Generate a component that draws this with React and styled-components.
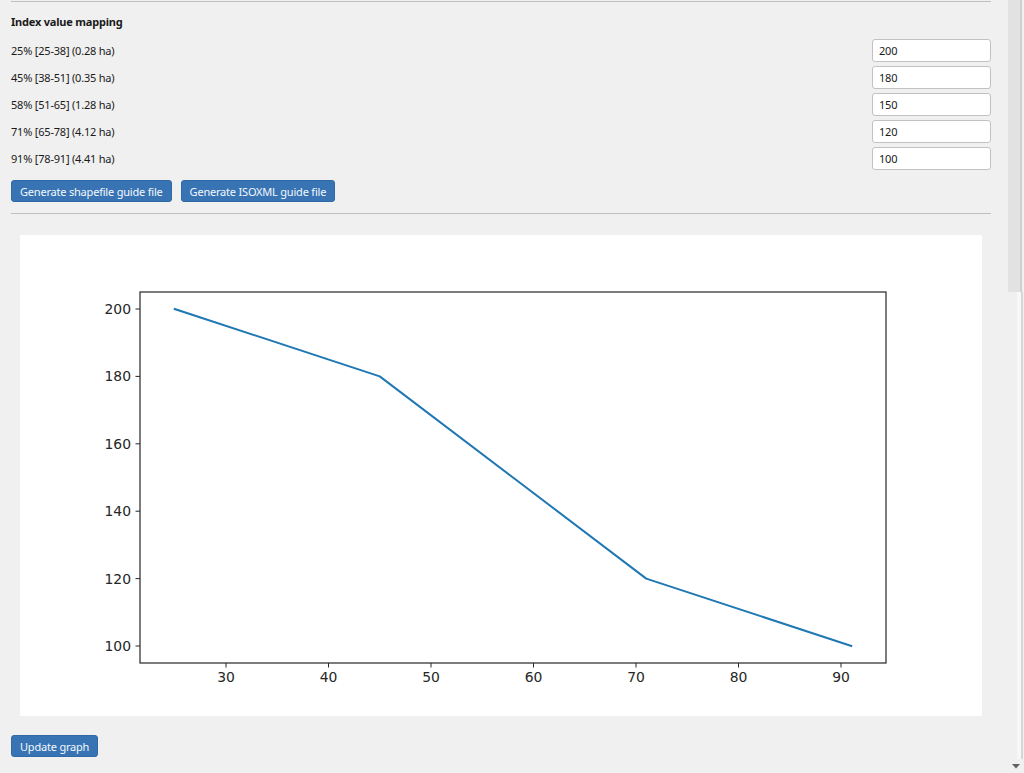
import React from 'react';
import styled, { createGlobalStyle } from 'styled-components';

const GlobalStyle = createGlobalStyle`
  html, body {
    margin: 0;
    padding: 0;
    background: #f0f0f0;
    overflow: hidden;
  }
  body {
    font-family: "Noto Sans", "Open Sans", sans-serif;
    font-size: 11px;
    letter-spacing: -0.2px;
    color: #1a1a1a;
  }
`;

const Window = styled.div`
  display: flex;
  width: 1024px;
  height: 773px;
  overflow: hidden;
`;

const Content = styled.div`
  flex: 1;
  padding: 0 16px 0 11px;
  display: flex;
  flex-direction: column;
`;

const Rule = styled.hr`
  border: none;
  border-top: 1px solid #bfbfbf;
  margin: ${p => p.$top || 0}px 0 0 0;
  height: 0;
`;

const Title = styled.div`
  font-weight: 700;
  font-size: 11px;
  line-height: 16px;
  margin-top: 12px;
  margin-bottom: 7px;
`;

const Row = styled.div`
  display: flex;
  align-items: center;
  justify-content: space-between;
  height: 27px;
`;

const Label = styled.span`
  font-size: 11px;
`;

const ValueInput = styled.input`
  box-sizing: border-box;
  width: 119px;
  height: 23px;
  border: 1px solid #c2c2c2;
  border-radius: 3px;
  background: #fff;
  font-family: inherit;
  font-size: 11px;
  letter-spacing: -0.2px;
  color: #1a1a1a;
  padding: 0 6px;
  outline: none;
`;

const ButtonRow = styled.div`
  display: flex;
  gap: 9px;
  margin-top: 8px;
`;

const Button = styled.button`
  box-sizing: border-box;
  height: 22px;
  padding: 0 8px;
  border: 1px solid #2f69a6;
  border-radius: 3px;
  background: #3874b4;
  color: #f4f8fc;
  font-family: inherit;
  font-size: 11px;
  letter-spacing: -0.2px;
  cursor: pointer;
`;

const ChartCard = styled.div`
  margin: 21px 0 0 9px;
  width: 962px;
  height: 481px;
  background: #fff;
`;

const Footer = styled.div`
  margin-top: 19px;
`;

const ScrollBar = styled.div`
  width: 17px;
  display: flex;
  flex-direction: column;
  background: #f0f0f0;
`;

const Thumb = styled.div`
  margin-left: 1px;
  width: 12px;
  height: 292px;
  background: #e2e2e2;
  border-right: 2px solid #cfcfcf;
`;

const Track = styled.div`
  flex: 1;
  margin-left: 10px;
  width: 4px;
  background: #f7f7f7;
  border-right: 2px solid #d6d6d6;
`;

const Arrow = styled.div`
  height: 14px;
  display: flex;
  align-items: center;
  justify-content: center;
`;

const rows = [
  { label: '25% [25-38] (0.28 ha)', x: 25, value: 200 },
  { label: '45% [38-51] (0.35 ha)', x: 45, value: 180 },
  { label: '58% [51-65] (1.28 ha)', x: 58, value: 150 },
  { label: '71% [65-78] (4.12 ha)', x: 71, value: 120 },
  { label: '91% [78-91] (4.41 ha)', x: 91, value: 100 },
];

// axes box in svg coords
const box = { left: 120, top: 57, right: 866, bottom: 428 };
const sx = v => 206 + (v - 30) * 10.25;
const sy = v => 411 - (v - 100) * 3.37;

function Chart() {
  const pts = rows.map(r => `${sx(r.x)},${sy(r.value)}`).join(' ');
  const xt = [30, 40, 50, 60, 70, 80, 90];
  const yt = [100, 120, 140, 160, 180, 200];
  return (
    <svg width="962" height="481" viewBox="0 0 962 481" style={{ letterSpacing: 0 }}>
      <polyline points={pts} fill="none" stroke="#1f77b4" strokeWidth="2" strokeLinejoin="round" strokeLinecap="square" />
      <rect x={box.left} y={box.top} width={box.right - box.left} height={box.bottom - box.top}
        fill="none" stroke="#262626" strokeWidth="1.2" />
      {xt.map(t => (
        <g key={t}>
          <line x1={sx(t)} x2={sx(t)} y1={box.bottom} y2={box.bottom + 4.5} stroke="#262626" strokeWidth="1" />
          <text x={sx(t)} y={box.bottom + 19} textAnchor="middle" fontFamily="DejaVu Sans, sans-serif" fontSize="13.9" fill="#262626">{t}</text>
        </g>
      ))}
      {yt.map(t => (
        <g key={t}>
          <line x1={box.left - 4.5} x2={box.left} y1={sy(t)} y2={sy(t)} stroke="#262626" strokeWidth="1" />
          <text x={box.left - 9} y={sy(t) + 5} textAnchor="end" fontFamily="DejaVu Sans, sans-serif" fontSize="13.9" fill="#262626">{t}</text>
        </g>
      ))}
    </svg>
  );
}

export default function App() {
  return (
    <Window>
      <GlobalStyle />
      <Content>
        <Rule $top={1} />
        <Title>Index value mapping</Title>
        {rows.map(r => (
          <Row key={r.label}>
            <Label>{r.label}</Label>
            <ValueInput defaultValue={r.value} />
          </Row>
        ))}
        <ButtonRow>
          <Button>Generate shapefile guide file</Button>
          <Button>Generate ISOXML guide file</Button>
        </ButtonRow>
        <Rule $top={11} />
        <ChartCard>
          <Chart />
        </ChartCard>
        <Footer>
          <Button>Update graph</Button>
        </Footer>
      </Content>
      <ScrollBar>
        <Thumb />
        <Track />
        <Arrow>
          <svg width="8" height="5" viewBox="0 0 8 5">
            <path d="M0 0 L8 0 L4 4.5 Z" fill="#606060" />
          </svg>
        </Arrow>
      </ScrollBar>
    </Window>
  );
}
